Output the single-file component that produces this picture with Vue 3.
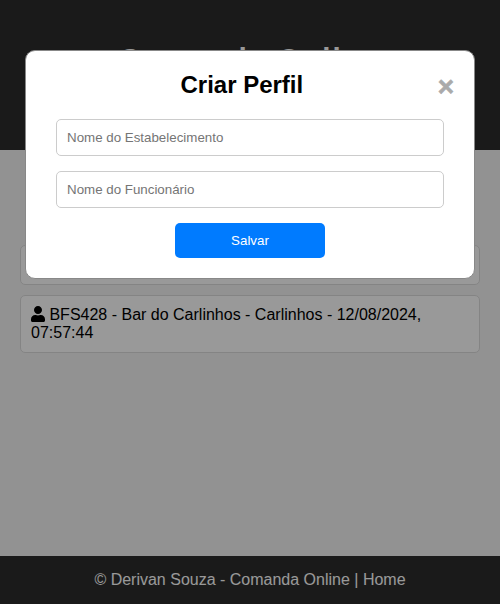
<script setup>
import { ref } from 'vue'

const establishment = ref('')
const employee = ref('')
const open = ref(true)
const profiles = ['', 'BFS428 - Bar do Carlinhos - Carlinhos - 12/08/2024, 07:57:44']
</script>

<template>
  <div class="page">
    <header class="header">
      <h1>Comanda Online</h1>
    </header>
    <main class="main">
      <ul class="profiles">
        <li v-for="(profile, i) in profiles" :key="i" class="profile">
          <template v-if="profile">
            <svg class="user" viewBox="0 0 448 512" aria-hidden="true">
              <path fill="currentColor" d="M224 256c70.700 0 128-57.300 128-128S294.700 0 224 0 96 57.300 96 128s57.300 128 128 128zm89.600 32h-16.700c-22.200 10.200-46.900 16-72.900 16s-50.600-5.800-72.900-16h-16.700C60.200 288 0 348.200 0 422.400V464c0 26.500 21.500 48 48 48h352c26.500 0 48-21.500 48-48v-41.600c0-74.200-60.200-134.400-134.400-134.400z" />
            </svg>
            {{ profile }}
          </template>
        </li>
      </ul>
    </main>
    <footer class="footer">© Derivan Souza - Comanda Online | <a>Home</a></footer>

    <div v-if="open" class="overlay">
      <section class="modal" role="dialog">
        <div class="heading">
          <h2>Criar Perfil</h2>
          <span class="close" @click="open = false">×</span>
        </div>
        <form class="form" @submit.prevent>
          <input v-model="establishment" type="text" placeholder="Nome do Estabelecimento" />
          <input v-model="employee" type="text" placeholder="Nome do Funcionário" />
          <button type="submit">Salvar</button>
        </form>
      </section>
    </div>
  </div>
</template>

<style>
body {
  margin: 0;
  font-family: Arial, "Liberation Sans", sans-serif;
}
</style>

<style scoped>
.page {
  display: flex;
  flex-direction: column;
  height: 100vh;
  overflow: hidden;
  background: #f4f4f4;
  font-size: 16px;
}
.header {
  display: flex;
  align-items: center;
  justify-content: center;
  box-sizing: border-box;
  height: 150px;
  padding-bottom: 32px;
  background: #2c2c2c;
  color: #fff;
}
.header h1 {
  margin: 0;
  font-size: 29.5px;
  letter-spacing: 2px;
}
.main {
  flex: 1;
  padding: 95px 20px 20px;
}
.profiles {
  display: flex;
  flex-direction: column;
  gap: 10px;
  margin: 0;
  padding: 0;
  list-style: none;
}
.profile {
  box-sizing: border-box;
  min-height: 40px;
  padding: 10px;
  border: 1px solid #ddd;
  border-radius: 5px;
  background: #fff;
  line-height: 18px;
}
.user {
  width: 14px;
  height: 16px;
  vertical-align: -2px;
}
.footer {
  box-sizing: border-box;
  height: 48px;
  padding-top: 15px;
  background: #2c2c2c;
  color: #fff;
  line-height: 18px;
  text-align: center;
}
.overlay {
  position: fixed;
  inset: 0;
  padding-top: 50px;
  background: rgba(0, 0, 0, 0.4);
}
.modal {
  box-sizing: border-box;
  width: 90%;
  height: 229px;
  margin: 0 auto;
  padding: 20px 30px;
  border: 1px solid #888;
  border-radius: 10px;
  background: #fff;
}
.heading {
  display: flex;
  align-items: center;
  height: 28px;
  margin-right: -10px;
}
.heading h2 {
  flex: 1;
  margin: 0;
  padding-right: 10px;
  font-size: 24px;
  line-height: 28px;
  text-align: center;
}
.close {
  padding-top: 3px;
  color: #aaa;
  font-size: 28px;
  font-weight: bold;
  line-height: 32px;
  -webkit-text-stroke: 0.6px #aaa;
}
.form {
  display: flex;
  flex-direction: column;
  align-items: center;
  gap: 15px;
  margin-top: 20px;
}
.form input {
  box-sizing: border-box;
  width: 100%;
  height: 37px;
  padding: 10px;
  border: 1px solid #ccc;
  border-radius: 5px;
  font-family: Arial, "Liberation Sans", sans-serif;
  font-size: 13.333px;
}
.form button {
  width: 150px;
  height: 35px;
  padding: 10px;
  border: 0;
  border-radius: 5px;
  background: #007bff;
  color: #fff;
  font-family: Arial, "Liberation Sans", sans-serif;
  font-size: 13.333px;
}
</style>
